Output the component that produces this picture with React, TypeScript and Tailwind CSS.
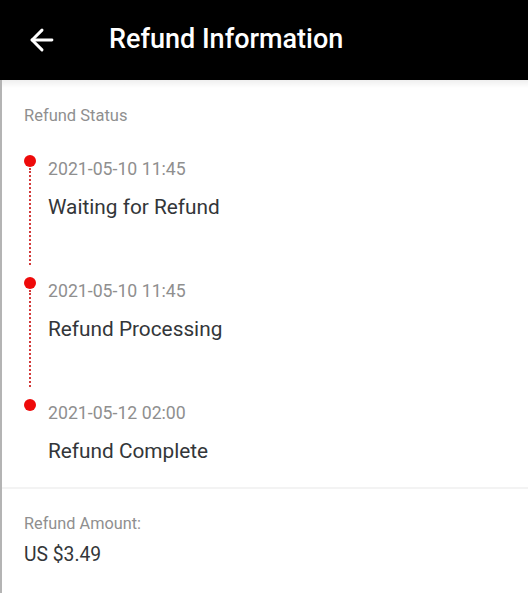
import React from "react";

const steps = [
  { date: "2021-05-10 11:45", title: "Waiting for Refund" },
  { date: "2021-05-10 11:45", title: "Refund Processing" },
  { date: "2021-05-12 02:00", title: "Refund Complete" },
];

export default function App() {
  return (
    <div className="w-[528px] h-[593px] overflow-hidden bg-white font-['Roboto',sans-serif]">
      <header className="h-[80px] bg-black flex items-center">
        <svg
          className="ml-[25px] shrink-0"
          width="34"
          height="34"
          viewBox="0 0 24 24"
          fill="none"
          stroke="#fff"
          strokeWidth="2.1"
          strokeLinecap="round"
          strokeLinejoin="round"
        >
          <path d="M19 12H5" />
          <path d="m12 19-7-7 7-7" />
        </svg>
        <h1 className="ml-[50px] pb-[2px] text-[27px] leading-[32px] font-medium text-white">
          Refund Information
        </h1>
      </header>
      <div className="border-l-2 border-[#b4b4b4] h-[513px]">
        <div className="h-[8px] bg-gradient-to-b from-[#efefef] to-white" />
        <section className="pl-[22px] pt-[16px]">
          <div className="text-[16.5px] leading-[24px] text-[#8f8f8f]">Refund Status</div>
          <div className="mt-[29px] flex flex-col gap-[58px]">
            {steps.map((s, i) => (
              <div key={i} className="relative pl-[24px]">
                <span className="absolute left-0 top-[-2px] w-[12px] h-[12px] rounded-full bg-[#ee0a0a]" />
                {i < steps.length - 1 && (
                  <span className="absolute left-[5px] top-[11px] h-[97px] border-l-2 border-dotted border-[#d23a3a]" />
                )}
                <div className="text-[17.7px] leading-[24px] text-[#8f8f8f]">{s.date}</div>
                <div className="mt-[12px] text-[20.8px] leading-[28px] text-[#333639]">{s.title}</div>
              </div>
            ))}
          </div>
        </section>
        <div className="mt-[22px] h-[2px] bg-[#f3f3f3]" />
        <section className="pl-[22px] pt-[23px]">
          <div className="text-[16.3px] leading-[24px] text-[#8f8f8f]">Refund Amount:</div>
          <div className="mt-[5px] text-[19.3px] leading-[28px] text-[#333639]">US $3.49</div>
        </section>
      </div>
    </div>
  );
}
